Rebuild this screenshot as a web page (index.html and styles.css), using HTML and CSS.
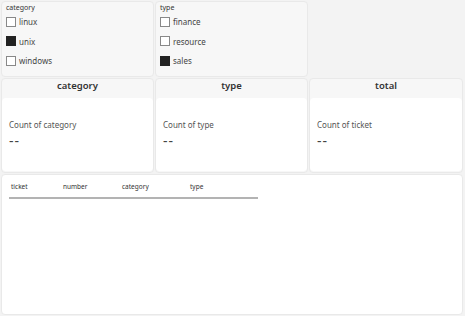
FILE: index.html
```html
<!DOCTYPE html>
<html lang="en">
<head>
    <meta charset="UTF-8">
    <title>Tickets dashboard</title>
    <link rel="stylesheet" href="styles.css">
</head>
<body>
<div class="board">
    <div class="panel filter">
        <div class="filter-title">category</div>
        <label class="option"><span class="box"></span>linux</label>
        <label class="option"><span class="box checked"></span>unix</label>
        <label class="option"><span class="box"></span>windows</label>
    </div>
    <div class="panel filter">
        <div class="filter-title">type</div>
        <label class="option"><span class="box"></span>finance</label>
        <label class="option"><span class="box"></span>resource</label>
        <label class="option"><span class="box checked"></span>sales</label>
    </div>
    <div class="empty"></div>

    <div class="panel kpi">
        <div class="kpi-title">category</div>
        <div class="card">
            <div class="label">Count of category</div>
            <div class="value">--</div>
        </div>
    </div>
    <div class="panel kpi">
        <div class="kpi-title">type</div>
        <div class="card">
            <div class="label">Count of type</div>
            <div class="value">--</div>
        </div>
    </div>
    <div class="panel kpi">
        <div class="kpi-title">total</div>
        <div class="card">
            <div class="label">Count of ticket</div>
            <div class="value">--</div>
        </div>
    </div>

    <div class="panel table-panel">
        <table class="grid">
            <thead>
                <tr>
                    <th class="c1">ticket</th>
                    <th class="c2">number</th>
                    <th class="c3">category</th>
                    <th class="c4">type</th>
                </tr>
            </thead>
        </table>
    </div>
</div>
</body>
</html>
```

FILE: styles.css
```css
html, body {
    margin: 0;
    padding: 0;
}
body {
    font-family: "Noto Sans", "Open Sans", sans-serif;
    background-color: #f3f3f3;
    color: #252423;
    width: 465px;
    height: 316px;
    overflow: hidden;
}
.board {
    display: grid;
    grid-template-columns: 153px 153px 154px;
    grid-template-rows: 76px 95px 141px;
    column-gap: 1px;
    row-gap: 1px;
    padding: 1px;
}
.panel {
    background-color: #f7f7f7;
    border: 1px solid #e9e9e9;
    border-radius: 4px;
    box-sizing: border-box;
}
.filter {
    padding: 1px 4px;
}
.filter-title {
    font-size: 7px;
    line-height: 9px;
    color: #333;
}
.option {
    display: flex;
    align-items: center;
    height: 19.5px;
    font-size: 8px;
    color: #444;
}
.box {
    width: 8px;
    height: 8px;
    border: 1px solid #888;
    background: #fff;
    margin-right: 3px;
}
.box.checked {
    background: #222;
    border-color: #222;
}
.kpi {
    display: flex;
    flex-direction: column;
    padding: 0 0 1px;
}
.kpi-title {
    text-align: center;
    font-size: 9.5px;
    font-weight: 600;
    color: #333;
    height: 19px;
    line-height: 14px;
}
.card {
    flex: 1;
    background: #fff;
    border-radius: 4px;
    padding: 21px 7px 0;
}
.label {
    font-size: 8px;
    color: #555;
    line-height: 12px;
}
.value {
    font-size: 14px;
    line-height: 20px;
    color: #444;
    letter-spacing: 1px;
}
.table-panel {
    grid-column: 1 / 4;
    background: #fff;
    border-radius: 4px;
    padding: 5px 6px;
}
.grid {
    border-collapse: collapse;
    table-layout: fixed;
    width: 249px;
    margin-left: 1px;
}
.grid th {
    font-size: 6.5px;
    font-weight: normal;
    text-align: left;
    color: #333;
    padding: 2px 0 6px 2px;
    border-bottom: 2px solid #b3b3b3;
}
.grid .c1 { width: 50px; }
.grid .c2 { width: 57px; }
.grid .c3 { width: 66px; }
```
